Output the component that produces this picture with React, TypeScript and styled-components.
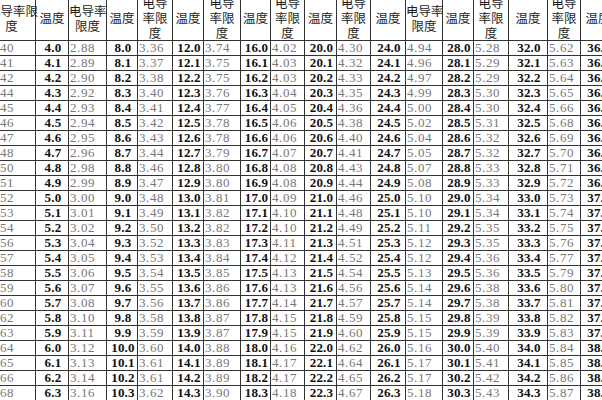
import React from "react";
import styled, { createGlobalStyle } from "styled-components";

const GlobalStyle = createGlobalStyle`
  html, body {
    margin: 0;
    padding: 0;
    background: #ffffff;
    overflow: hidden;
  }
`;

const Page = styled.div`
  width: 602px;
  height: 400px;
  overflow: hidden;
  background: #ffffff;
`;

const Table = styled.table`
  border-collapse: collapse;
  table-layout: fixed;
  width: 628px;
  margin-left: -13px;
  margin-top: -6px;
`;

const HeadCell = styled.th`
  height: 44px;
  padding: 0;
  border: 1px solid #333333;
  font-family: "Noto Sans CJK SC", "Noto Sans", sans-serif;
  font-weight: 400;
  font-size: 12.5px;
  line-height: 15px;
  color: #1e1e1e;
  text-align: center;
  vertical-align: middle;
  white-space: nowrap;
`;

const Row = styled.tr`
  height: 15px;
`;

const Cell = styled.td<{ $kind: "temp" | "cond" }>`
  padding: ${(p) => (p.$kind === "temp" ? "0 0 0 2px" : "0 0 0 1px")};
  border: 1px solid #333333;
  font-family: "Liberation Serif", "Times New Roman", serif;
  font-size: 13px;
  line-height: 14px;
  letter-spacing: ${(p) => (p.$kind === "temp" ? "0.2px" : "0.6px")};
  font-weight: ${(p) => (p.$kind === "temp" ? 700 : 400)};
  color: ${(p) => (p.$kind === "temp" ? "#111111" : "#777777")};
  text-align: ${(p) => (p.$kind === "temp" ? "center" : "left")};
  white-space: nowrap;
  overflow: hidden;
`;

type Column =
  | { kind: "cond"; width: number; head: string[]; values: string[] }
  | { kind: "temp"; width: number; start: number };

const list = (s: string) => s.split(" ");

const columns: Column[] = [
  {
    kind: "cond",
    width: 48,
    head: ["电导率限", "度"],
    values: list("2.40 2.41 2.42 2.44 2.45 2.46 2.47 2.48 2.50 2.51 2.52 2.53 2.54 2.56 2.57 2.58 2.59 2.60 2.62 2.63 2.64 2.65 2.66 2.68"),
  },
  { kind: "temp", width: 33, start: 4.0 },
  {
    kind: "cond",
    width: 38,
    head: ["电导率", "限度"],
    values: list("2.88 2.89 2.90 2.92 2.93 2.94 2.95 2.96 2.98 2.99 3.00 3.01 3.02 3.04 3.05 3.06 3.07 3.08 3.10 3.11 3.12 3.13 3.14 3.16"),
  },
  { kind: "temp", width: 31, start: 8.0 },
  {
    kind: "cond",
    width: 35,
    head: ["电导", "率限", "度"],
    values: list("3.36 3.37 3.38 3.40 3.41 3.42 3.43 3.44 3.46 3.47 3.48 3.49 3.50 3.52 3.53 3.54 3.55 3.56 3.58 3.59 3.60 3.61 3.61 3.62"),
  },
  { kind: "temp", width: 31, start: 12.0 },
  {
    kind: "cond",
    width: 37,
    head: ["电导", "率限", "度"],
    values: list("3.74 3.75 3.75 3.76 3.77 3.78 3.78 3.79 3.80 3.80 3.81 3.82 3.82 3.83 3.84 3.85 3.86 3.86 3.87 3.87 3.88 3.89 3.89 3.90"),
  },
  { kind: "temp", width: 30, start: 16.0 },
  {
    kind: "cond",
    width: 34,
    head: ["电导", "率限", "度"],
    values: list("4.02 4.03 4.03 4.04 4.05 4.06 4.06 4.07 4.08 4.08 4.09 4.10 4.10 4.11 4.12 4.13 4.13 4.14 4.15 4.15 4.16 4.17 4.17 4.18"),
  },
  { kind: "temp", width: 32, start: 20.0 },
  {
    kind: "cond",
    width: 34,
    head: ["电导", "率限", "度"],
    values: list("4.30 4.32 4.33 4.35 4.36 4.38 4.40 4.41 4.43 4.44 4.46 4.48 4.49 4.51 4.52 4.54 4.56 4.57 4.59 4.60 4.62 4.64 4.65 4.67"),
  },
  { kind: "temp", width: 35, start: 24.0 },
  {
    kind: "cond",
    width: 37,
    head: ["电导率", "限度"],
    values: list("4.94 4.96 4.97 4.99 5.00 5.02 5.04 5.05 5.07 5.08 5.10 5.10 5.11 5.12 5.12 5.13 5.14 5.14 5.15 5.15 5.16 5.17 5.17 5.18"),
  },
  { kind: "temp", width: 31, start: 28.0 },
  {
    kind: "cond",
    width: 35,
    head: ["电导", "率限", "度"],
    values: list("5.28 5.29 5.29 5.30 5.30 5.31 5.32 5.32 5.33 5.33 5.34 5.34 5.35 5.35 5.36 5.36 5.38 5.38 5.39 5.39 5.40 5.41 5.42 5.43"),
  },
  { kind: "temp", width: 39, start: 32.0 },
  {
    kind: "cond",
    width: 33,
    head: ["电导", "率限", "度"],
    values: list("5.62 5.63 5.64 5.65 5.66 5.68 5.69 5.70 5.71 5.72 5.73 5.74 5.75 5.76 5.77 5.79 5.80 5.81 5.82 5.83 5.84 5.85 5.86 5.87"),
  },
  { kind: "temp", width: 35, start: 36.0 },
];

const ROWS = 24;

export default function App() {
  return (
    <Page>
      <GlobalStyle />
      <Table>
        <colgroup>
          {columns.map((c, i) => (
            <col key={i} style={{ width: c.width }} />
          ))}
        </colgroup>
        <thead>
          <tr>
            {columns.map((c, i) => (
              <HeadCell key={i}>
                {c.kind === "temp"
                  ? "温度"
                  : c.head.map((line, j) => (
                      <React.Fragment key={j}>
                        {j > 0 && <br />}
                        {line}
                      </React.Fragment>
                    ))}
              </HeadCell>
            ))}
          </tr>
        </thead>
        <tbody>
          {Array.from({ length: ROWS }, (_, r) => (
            <Row key={r}>
              {columns.map((c, i) =>
                c.kind === "temp" ? (
                  <Cell key={i} $kind="temp">
                    {(c.start + r * 0.1).toFixed(1)}
                  </Cell>
                ) : (
                  <Cell key={i} $kind="cond">
                    {c.values[r]}
                  </Cell>
                )
              )}
            </Row>
          ))}
        </tbody>
      </Table>
    </Page>
  );
}
